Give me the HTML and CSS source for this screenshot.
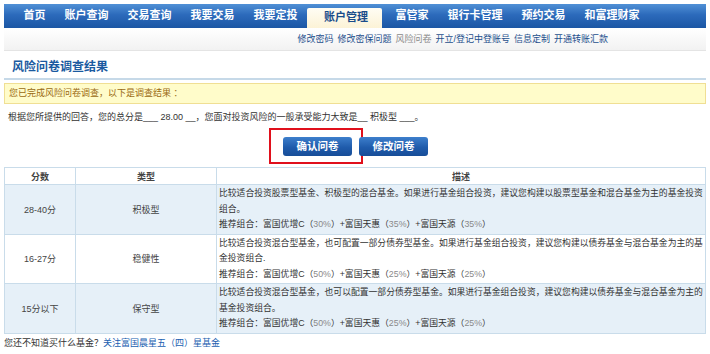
FILE: index.html
```html
<!DOCTYPE html>
<html lang="zh-CN">
	<head>
		<meta charset="UTF-8" />
		<title>风险问卷调查结果</title>
		<link rel="stylesheet" href="styles.css">
	</head>
	<body>
		<div class="page">
			<div class="nav">
				<a class="nav-item first">首页</a>
				<a class="nav-item">账户查询</a>
				<a class="nav-item">交易查询</a>
				<a class="nav-item">我要交易</a>
				<a class="nav-item">我要定投</a>
				<a class="nav-item active">账户管理</a>
				<a class="nav-item">富管家</a>
				<a class="nav-item">银行卡管理</a>
				<a class="nav-item">预约交易</a>
				<a class="nav-item">和富理财家</a>
			</div>
			<div class="subnav">
				<a>修改密码</a>
				<a>修改密保问题</a>
				<a class="current">风险问卷</a>
				<a>开立/登记中登账号</a>
				<a>信息定制</a>
				<a>开通转账汇款</a>
			</div>

			<h1 class="title">风险问卷调查结果</h1>

			<div class="notice">您已完成风险问卷调查，以下是调查结果 ：</div>

			<p class="result">根据您所提供的回答，您的总分是___ 28.00 __，您面对投资风险的一般承受能力大致是__ 积极型 ___。</p>

			<div class="button-box">
				<div class="highlight">
					<a class="btn">确认问卷</a>
				</div>
				<a class="btn">修改问卷</a>
			</div>

			<table class="result-table">
				<tr>
					<th class="col-score">分数</th>
					<th class="col-type">类型</th>
					<th>描述</th>
				</tr>
				<tr class="alt">
					<td class="center">28-40分</td>
					<td class="center">积极型</td>
					<td class="desc">比较适合投资股票型基金、积极型的混合基金。如果进行基金组合投资，建议您构建以股票型基金和混合基金为主的基金投资<br>组合。<br>推荐组合：富国优增C（<span class="pct">30%</span>）+富国天惠（<span class="pct">35%</span>）+富国天源（<span class="pct">35%</span>）</td>
				</tr>
				<tr>
					<td class="center">16-27分</td>
					<td class="center">稳健性</td>
					<td class="desc">比较适合投资混合型基金，也可配置一部分债券型基金。如果进行基金组合投资，建议您构建以债券基金与混合基金为主的基<br>金投资组合.<br>推荐组合：富国优增C（<span class="pct">50%</span>）+富国天惠（<span class="pct">25%</span>）+富国天源（<span class="pct">25%</span>）</td>
				</tr>
				<tr class="alt">
					<td class="center">15分以下</td>
					<td class="center">保守型</td>
					<td class="desc">比较适合投资混合型基金，也可以配置一部分债券型基金。如果进行基金组合投资，建议您构建以债券基金与混合基金为主的<br>基金投资组合。<br>推荐组合：富国优增C（<span class="pct">50%</span>）+富国天惠（<span class="pct">25%</span>）+富国天源（<span class="pct">25%</span>）</td>
				</tr>
			</table>

			<p class="footer">您还不知道买什么基金？<a>关注富国晨星五（四）星基金</a></p>
		</div>
	</body>
</html>
```

FILE: styles.css
```css
body {
	margin: 0;
	background-color: #fff;
	font-family: "Liberation Sans", "Noto Sans CJK SC", sans-serif;
	font-size: 9px;
	color: #333;
}

a {
	cursor: pointer;
}

.page {
	padding: 4px 4px 0 4px;
}

.nav {
	display: flex;
	align-items: flex-end;
	height: 24px;
	padding-left: 10px;
	background: linear-gradient(#5090d6, #2c6abb 45%, #1b56a4);
}

.nav-item {
	padding: 0 9.5px;
	height: 24px;
	line-height: 23px;
	font-size: 11px;
	font-weight: bold;
	color: #fff;
}

.nav-item.active {
	height: 20px;
	line-height: 19px;
	padding: 0 14px 0 17px;
	margin-right: 4px;
	background: linear-gradient(#fffdf4, #fcf3d6);
	color: #1a4c8a;
	border-radius: 2px 2px 0 0;
}

.subnav {
	display: flex;
	justify-content: flex-end;
	gap: 4px;
	height: 22px;
	line-height: 22px;
	padding-right: 98px;
	background: linear-gradient(#ffffff, #f2f2f2);
	border-bottom: 1px solid #e4e4e4;
}

.subnav a {
	color: #1d4f8c;
}

.subnav a.current {
	color: #8a8a8a;
}

.title {
	margin: 0;
	padding: 9px 0 4px 8px;
	font-size: 12px;
	line-height: 14px;
	color: #1a5aa0;
	border-bottom: 2px solid #c6d9e8;
}

.notice {
	margin-top: 3px;
	height: 19px;
	line-height: 19px;
	padding-left: 4px;
	background-color: #fffcca;
	border: 1px solid #f0df94;
	color: #9a6a12;
}

.result {
	margin: 7px 0 0 4px;
	line-height: 13px;
}

.button-box {
	display: flex;
	align-items: center;
	padding-left: 265px;
	margin-top: 1px;
	height: 42px;
}

.highlight {
	display: flex;
	align-items: center;
	padding: 0 9px 0 12px;
	height: 32px;
	border: 2px solid #e0101c;
}

.btn {
	display: inline-block;
	width: 69px;
	height: 19px;
	line-height: 19px;
	text-align: center;
	font-size: 10.5px;
	font-weight: bold;
	color: #fff;
	background: linear-gradient(#3d7fcc, #1f5bab 55%, #174d98);
	border-radius: 3px;
}

.highlight + .btn {
	margin-left: -4px;
}

.result-table {
	width: 702px;
	table-layout: fixed;
	border-collapse: collapse;
	margin-top: 0;
}

.result-table th,
.result-table td {
	box-sizing: border-box;
	border: 1px solid #c9dcea;
	color: #444;
}

.result-table th {
	height: 17px;
	font-size: 9px;
	background-color: #fff;
}

.col-score {
	width: 71px;
}

.col-type {
	width: 141px;
}

.result-table tr.alt td {
	background-color: #e6f0f8;
}

.result-table td.center {
	text-align: center;
}

.result-table td.desc {
	padding: 1px 2px 1px 2px;
	font-size: 8.8px;
	line-height: 15.5px;
	white-space: nowrap;
	overflow: hidden;
	color: #333;
}

.pct {
	color: #8a8a8a;
}

.footer {
	margin: 3px 0 0 0;
	line-height: 13px;
}

.footer a {
	color: #2160b0;
}
```
